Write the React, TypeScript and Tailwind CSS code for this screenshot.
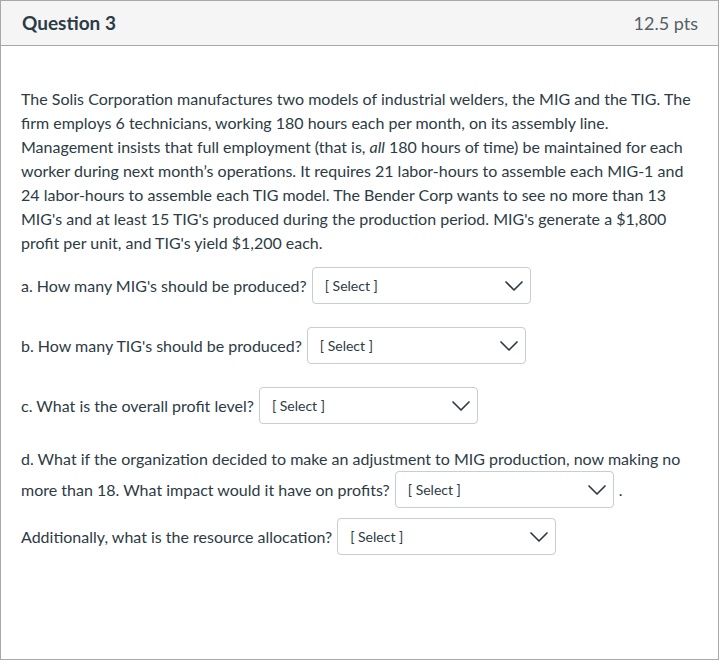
function Dropdown() {
  return (
    <div className="flex h-[37px] w-[219px] shrink-0 items-center justify-between rounded-[4px] border border-[#c7cdd1] bg-white pl-[12px] pr-[6px]">
      <span className="text-[14px] text-[#2d3b45]">[ Select ]</span>
      <svg width="20" height="12" viewBox="0 0 20 12" fill="none" className="text-[#2d3b45]">
        <path d="M2 2 L10 10 L18 2" stroke="currentColor" strokeWidth="1.7" strokeLinecap="round" strokeLinejoin="round" />
      </svg>
    </div>
  );
}

export default function App() {
  return (
    <div className="h-[664px] w-[728px] bg-white font-['Lato','Liberation_Sans',sans-serif] text-[#2d3b45]">
      <div className="flex h-[660px] w-[719px] flex-col border border-[#a8a8a8]">
        <div className="flex h-[45px] shrink-0 items-center justify-between border-b border-[#a8a8a8] bg-[#f5f5f5] pl-[21px] pr-[20px]">
          <h2 className="text-[19px] font-bold text-[#2d3b45]">Question 3</h2>
          <span className="text-[18px] text-[#555f66]">12.5 pts</span>
        </div>

        <div className="pl-[20px] pr-[20px] pt-[41px] text-[16px] leading-[24px]">
          <p>
            The Solis Corporation manufactures two models of industrial welders, the MIG and the TIG. The
            firm employs 6 technicians, working 180 hours each per month, on its assembly line.
            Management insists that full employment (that is, <em>all</em> 180 hours of time) be maintained for each
            worker during next month’s operations. It requires 21 labor-hours to assemble each MIG-1 and
            24 labor-hours to assemble each TIG model. The Bender Corp wants to see no more than 13
            MIG's and at least 15 TIG's produced during the production period. MIG's generate a $1,800
            profit per unit, and TIG's yield $1,200 each.
          </p>

          <div className="mt-[12px] flex items-center gap-[5px]">
            <span>a. How many MIG's should be produced?</span>
            <Dropdown />
          </div>

          <div className="mt-[23px] flex items-center gap-[5px]">
            <span>b. How many TIG's should be produced?</span>
            <Dropdown />
          </div>

          <div className="mt-[23px] flex items-center gap-[5px]">
            <span>c. What is the overall profit level?</span>
            <Dropdown />
          </div>

          <div className="mt-[23px]">
            <div>d. What if the organization decided to make an adjustment to MIG production, now making no</div>
            <div className="flex items-center gap-[5px]">
              <span>more than 18. What impact would it have on profits?</span>
              <Dropdown />
              <span>.</span>
            </div>
          </div>

          <div className="mt-[10px] flex items-center gap-[5px]">
            <span>Additionally, what is the resource allocation?</span>
            <Dropdown />
          </div>
        </div>
      </div>
    </div>
  );
}
